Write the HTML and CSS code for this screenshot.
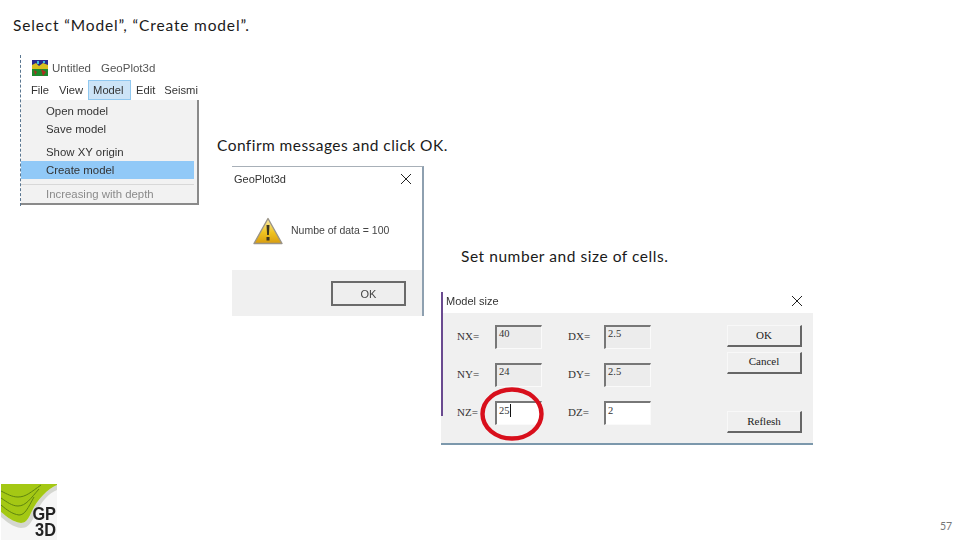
FILE: index.html
```html
<!DOCTYPE html>
<html lang="en">
<head>
<meta charset="utf-8">
<title>Create model</title>
<link rel="stylesheet" href="styles.css">
</head>
<body>
<main class="slide">
  <p class="caption cap-1">Select “Model”, “Create model”.</p>
  <p class="caption cap-2">Confirm messages and click OK.</p>
  <p class="caption cap-3">Set number and size of cells.</p>

  <section class="win app">
    <div class="app-title">
      <svg class="app-icon" viewBox="0 0 16 16" width="16" height="16">
        <rect width="16" height="16" fill="#2a2a8c"/>
        <path d="M0 5l4-2 3 3 4-3 5 2v4H0z" fill="#d8c020"/>
        <path d="M0 9h16v7H0z" fill="#1c8a2c"/>
        <path d="M2 10l3 2-2 3zM9 9l5 3-3 4z" fill="#a83020"/>
        <path d="M5 1h2v3H5zM11 1h2v2h-2z" fill="#40c0e0"/>
      </svg>
      <span class="app-name">Untitled</span><span class="app-name">GeoPlot3d</span>
    </div>
    <div class="menubar">
      <span class="mi">File</span><span class="mi">View</span><span class="mi mi-on">Model</span><span class="mi mi-edit">Edit</span><span class="mi">Seismi</span>
    </div>
    <div class="menu">
      <div class="row">Open model</div>
      <div class="row">Save model</div>
      <div class="row row-gap">Show XY origin</div>
      <div class="row row-on">Create model</div>
      <div class="row row-off">Increasing with depth</div>
    </div>
  </section>

  <section class="win msg">
    <header class="msg-head"><span>GeoPlot3d</span>
      <svg class="x" viewBox="0 0 10 10" width="10" height="10"><path d="M0 0l10 10M10 0L0 10" stroke="#222" stroke-width="1" fill="none"/></svg>
    </header>
    <div class="msg-body">
      <svg class="warn" viewBox="0 0 30 28" width="30" height="28">
        <defs><linearGradient id="wg" x1="0" y1="0" x2="0" y2="1"><stop offset="0" stop-color="#f8ecb0"/><stop offset=".55" stop-color="#f0c420"/><stop offset="1" stop-color="#d89c10"/></linearGradient></defs>
        <path d="M15 1.500L29 26.500H1z" fill="url(#wg)" stroke="#9a9488" stroke-width="1.400" stroke-linejoin="round"/>
        <path d="M13.500 8h3l-.6 10h-1.800z" fill="#3a3420"/>
        <rect x="13.500" y="20" width="3" height="3.500" fill="#3a3420"/>
      </svg>
      <span>Numbe of data = 100</span>
    </div>
    <footer class="msg-foot"><span class="msg-ok">OK</span></footer>
  </section>

  <section class="win size">
    <header class="size-head"><span>Model size</span>
      <svg class="x" viewBox="0 0 10 10" width="10" height="10"><path d="M0 0l10 10M10 0L0 10" stroke="#222" stroke-width="1" fill="none"/></svg>
    </header>
    <div class="size-body">
      <div class="fields">
        <label class="lab">NX=</label><span class="fld">40</span><label class="lab lab-r">DX=</label><span class="fld">2.5</span>
        <label class="lab">NY=</label><span class="fld">24</span><label class="lab lab-r">DY=</label><span class="fld">2.5</span>
        <label class="lab">NZ=</label><span class="fld fld-on">25<i class="caret"></i></span><label class="lab lab-r">DZ=</label><span class="fld fld-on">2</span>
      </div>
      <div class="btns">
        <span class="btn">OK</span>
        <span class="btn btn-2">Cancel</span>
        <span class="btn btn-3">Reflesh</span>
      </div>
    </div>
    <div class="side-line"></div>
  </section>

  <svg class="ring" viewBox="0 0 64 54" width="64" height="54"><ellipse cx="32" cy="27" rx="29.500" ry="24.500" fill="none" stroke="#d80f1c" stroke-width="4.400"/></svg>

  <div class="logo">
    <svg viewBox="0 0 56 56" width="56" height="56">
      <rect width="56" height="56" fill="#f6f6f6"/>
      <path d="M0 33C6 38 12 43 20 44 26 44 29 41 33 33 38 21 46 10 56 6V1C46 5 36 16 30 29 27 36 24 39 20 39 12 38 6 33 0 28z" fill="#d4d6d0"/>
      <path d="M0 0H56V1C46 5 36 16 30 29 27 36 24 39 20 39 12 38 6 33 0 28z" fill="#a4c814"/>
      <path d="M0 7C6 10 11 13 17 13 25 13 30 8 40 1M0 14C6 18 11 22 17 22 25 22 30 14 38 5M0 21C6 26 11 30 18 31 24 31 27 24 33 13" fill="none" stroke="#5f8410" stroke-width="1"/>
    </svg>
    <div class="logo-mark">GP<br>3D</div>
  </div>
  <span class="pageno">57</span>
</main>
</body>
</html>
```
FILE: styles.css
```css
html, body { margin: 0; padding: 0; background: #fff; }
.slide { position: relative; width: 960px; height: 540px; overflow: hidden; background: #fff; font-family: Lato, sans-serif; }
.caption { position: absolute; margin: 0; font-size: 15.500px; line-height: 20px; color: #1a1a1a; white-space: nowrap; }
.cap-1 { left: 13px; top: 15px; letter-spacing: 0.85px; }
.cap-2 { left: 217px; top: 135px; letter-spacing: 0.45px; }
.cap-3 { left: 461px; top: 246px; letter-spacing: 0.55px; }

.win { position: absolute; box-sizing: border-box; font-family: "Liberation Sans", sans-serif; color: #333; filter: blur(0.35px); }

.app { left: 20px; top: 55px; width: 179px; height: 151px; border-left: 1px dashed #5a7690; }
.app-title { height: 25px; display: flex; align-items: center; gap: 10px; padding-left: 11px; font-size: 11.500px; color: #555; }
.app-icon { margin-right: -6px; flex: none; }
.menubar { display: flex; height: 20px; font-size: 11.200px; color: #333; padding-left: 10px; overflow: hidden; white-space: nowrap; }
.mi { display: flex; align-items: center; flex: none; margin-right: 10px; }
.mi-on { background: #cce4f7; border: 1px solid #90c8f0; box-sizing: border-box; width: 43px; padding-left: 4px; margin: 0 5px 0 -5px; }
.mi-edit { margin-right: 9px; }
.menu { box-sizing: border-box; height: 105px; background: #f2f2f2; border-right: 2px solid #8a8a8a; border-bottom: 2px solid #8a8a8a; padding-top: 2px; font-size: 11.400px; }
.row { height: 18px; line-height: 18px; padding-left: 25px; margin-right: 3px; color: #333; }
.row-gap { margin-top: 5px; }
.row-on { background: #91c9f7; }
.row-off { margin-top: 5px; color: #8a8a8a; border-top: 1px solid #d8d8d8; }

.msg { left: 232px; top: 166px; width: 192px; height: 150px; border-top: 1px solid #a8b0b8; border-right: 2px solid #8ea0b0; display: flex; flex-direction: column; font-size: 11px; }
.msg-head { height: 24px; display: flex; justify-content: space-between; align-items: center; padding: 0 11px 0 2px; }
.msg-body { flex: 1; display: flex; align-items: flex-start; gap: 8px; padding: 26px 0 0 21px; color: #444; font-size: 10.500px; }
.msg-body span { margin-top: 7px; }
.warn { flex: none; }
.msg-foot { height: 46px; background: #f0f0f0; display: flex; justify-content: flex-end; padding: 11px 16px 0 0; box-sizing: border-box; }
.msg-ok { box-sizing: border-box; width: 75px; height: 25px; border: 2px solid #6a6a6a; display: flex; align-items: center; justify-content: center; color: #444; background: #eee; }

.size { left: 441px; top: 292px; width: 372px; height: 153px; display: flex; flex-direction: column; font-family: "Liberation Serif", serif; }
.side-line { position: absolute; left: 0; top: 0; width: 2px; height: 124px; background: #6a4a90; }
.size-head { box-sizing: border-box; height: 21px; display: flex; justify-content: space-between; align-items: center; padding: 0 11px 3px 5px; font-family: "Liberation Sans", sans-serif; font-size: 11px; color: #333; }
.size-body { flex: 1; background: #f0f0f0; border-bottom: 2px solid #7c98ac; display: flex; padding: 12px 0 0 16px; box-sizing: border-box; }
.fields { display: grid; grid-template-columns: 38px 47px 62px 47px; grid-auto-rows: 24px; row-gap: 14px; width: 194px; }
.lab { font-size: 11px; color: #333; line-height: 22px; }
.lab-r { padding-left: 26px; }
.fld { box-sizing: border-box; height: 24px; background: #ececec; border-top: 2px solid #777; border-left: 2px solid #777; border-right: 1px solid #fafafa; border-bottom: 1px solid #fafafa; font-size: 10.500px; line-height: 14px; padding-left: 2px; color: #333; }
.fld-on { background: #fff; padding-top: 1px; }
.caret { display: inline-block; width: 1px; height: 13px; background: #111; vertical-align: top; }
.btns { margin-left: 76px; display: flex; flex-direction: column; width: 75px; }
.btn { box-sizing: border-box; height: 22px; background: #efefef; border: 1px solid #f8f8f8; border-right: 2px solid #666; border-bottom: 2px solid #666; font-size: 11px; line-height: 18px; text-align: center; color: #222; }
.btn-2 { margin-top: 5px; line-height: 16px; }
.btn-3 { margin-top: 37px; }

.ring { position: absolute; left: 480px; top: 387px; }
.logo { position: absolute; left: 1px; top: 484px; width: 56px; height: 56px; filter: blur(0.3px); }
.logo svg { display: block; }
.logo-mark { position: absolute; right: 1px; bottom: 2px; width: 28px; font-family: "Liberation Sans", sans-serif; font-weight: 700; font-size: 19px; line-height: 16px; color: #222; text-align: right; transform: scaleX(0.86); transform-origin: right center; }
.pageno { position: absolute; left: 940px; top: 519px; font-size: 10.500px; line-height: 14px; color: #777; }
```
